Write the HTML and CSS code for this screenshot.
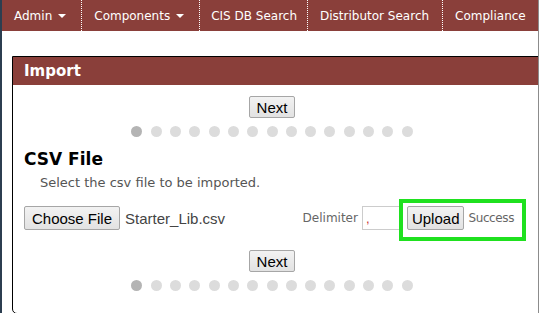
FILE: index.html
```html
<!DOCTYPE html>
<html lang="en">
  <head>
    <meta charset="UTF-8" />
    <title>Import</title>
    <link rel="stylesheet" href="styles.css">
  </head>
  <body>
    <div class="frame">
      <ul class="nav">
        <li>Admin <span class="caret"></span></li>
        <li>Components <span class="caret"></span></li>
        <li>CIS DB Search</li>
        <li>Distributor Search</li>
        <li>Compliance</li>
      </ul>

      <div class="panel">
        <div class="panel-head">Import</div>
        <div class="panel-body">
          <div class="stepper">
            <button class="btn">Next</button>
            <div class="dots">
              <span class="dot active"></span>
              <span class="dot"></span>
              <span class="dot"></span>
              <span class="dot"></span>
              <span class="dot"></span>
              <span class="dot"></span>
              <span class="dot"></span>
              <span class="dot"></span>
              <span class="dot"></span>
              <span class="dot"></span>
              <span class="dot"></span>
              <span class="dot"></span>
              <span class="dot"></span>
              <span class="dot"></span>
              <span class="dot"></span>
            </div>
          </div>

          <h2>CSV File</h2>
          <p class="hint">Select the csv file to be imported.</p>

          <div class="file-row">
            <button class="btn">Choose File</button>
            <span class="file-name">Starter_Lib.csv</span>
            <div class="upload">
              <label>Delimiter</label>
              <input type="text" value="," />
              <span class="highlight">
                <button class="btn upload-btn">Upload</button>
                <span class="status">Success</span>
              </span>
            </div>
          </div>

          <div class="stepper bottom">
            <button class="btn">Next</button>
            <div class="dots">
              <span class="dot active"></span>
              <span class="dot"></span>
              <span class="dot"></span>
              <span class="dot"></span>
              <span class="dot"></span>
              <span class="dot"></span>
              <span class="dot"></span>
              <span class="dot"></span>
              <span class="dot"></span>
              <span class="dot"></span>
              <span class="dot"></span>
              <span class="dot"></span>
              <span class="dot"></span>
              <span class="dot"></span>
              <span class="dot"></span>
            </div>
          </div>
        </div>
      </div>
    </div>
  </body>
</html>
```

FILE: styles.css
```css
body {
  margin: 0;
  font-family: "DejaVu Sans", Verdana, sans-serif;
  background: #fff;
}

.frame {
  width: 536px;
  height: 313px;
  border-left: 2px solid #2c3e50;
  border-right: 1px solid #8c8c8c;
  overflow: hidden;
}

.nav {
  display: flex;
  margin: 0;
  padding: 0;
  height: 31px;
  list-style: none;
  background-color: #8a3f3a;
}

.nav li {
  display: flex;
  align-items: center;
  padding: 0 13px 0 12px;
  color: #fff;
  font-size: 12px;
  border-right: 1px dotted #fff;
  white-space: nowrap;
}

.nav li:first-child {
  padding-right: 15px;
}

.nav li:nth-child(2) {
  padding-right: 15px;
}

.nav li:nth-child(3) {
  padding: 0 10px 0 11px;
}

.caret {
  display: inline-block;
  margin-left: 6px;
  border-left: 4px solid transparent;
  border-right: 4px solid transparent;
  border-top: 4px solid #fff;
}

.panel {
  margin: 25px -8px 0 10px;
  border: 1px solid #000;
  border-radius: 0 0 0 5px;
}

.panel-head {
  height: 28px;
  padding-left: 11px;
  line-height: 28px;
  background-color: #8a3f3a;
  color: #fff;
  font-size: 15px;
  font-weight: bold;
}

.panel-body {
  padding: 11px 0 22px 11px;
}

.stepper {
  display: flex;
  flex-direction: column;
  align-items: center;
  padding-right: 25px;
}

.stepper.bottom {
  margin-top: 20px;
}

.btn {
  height: 22px;
  padding: 0 7px;
  font-family: "Liberation Sans", Arial, sans-serif;
  font-size: 15px;
  color: #000;
  background: linear-gradient(#f2f2f2, #e2e2e2);
  border: 1px solid #a6a6a6;
  border-radius: 2px;
}

.dots {
  display: flex;
  gap: 8.3px;
  margin-top: 8px;
}

.dot {
  width: 11px;
  height: 11px;
  border-radius: 50%;
  background-color: #dcdcdc;
}

.dot.active {
  background-color: #b4b4b4;
}

h2 {
  margin: 11px 0 0;
  font-size: 17px;
  line-height: 22px;
  color: #000;
}

.hint {
  margin: 5px 0 0 16px;
  font-size: 13px;
  color: #555;
}

.file-row {
  display: flex;
  align-items: center;
  margin-top: 16px;
}

.file-row .btn {
  height: 24px;
}

.file-name {
  margin-left: 5px;
  font-family: "Liberation Sans", Arial, sans-serif;
  font-size: 15px;
  color: #444;
}

.upload {
  display: flex;
  align-items: center;
  margin-left: auto;
  margin-right: 31px;
  font-size: 12px;
  color: #666;
}

.upload input {
  width: 32px;
  height: 22px;
  margin-left: 4px;
  padding: 0 3px;
  border: 1px solid #ccc;
  color: #c33;
  font-size: 13px;
}

.highlight {
  position: relative;
  display: flex;
  align-items: center;
  margin-left: 5px;
}

.highlight::after {
  content: "";
  position: absolute;
  left: -8px;
  top: -7px;
  right: -12px;
  bottom: -11px;
  border: 4px solid #1fe11f;
}

.upload-btn {
  padding: 0 4px;
}

.status {
  margin-left: 4px;
  letter-spacing: -0.4px;
}
```
